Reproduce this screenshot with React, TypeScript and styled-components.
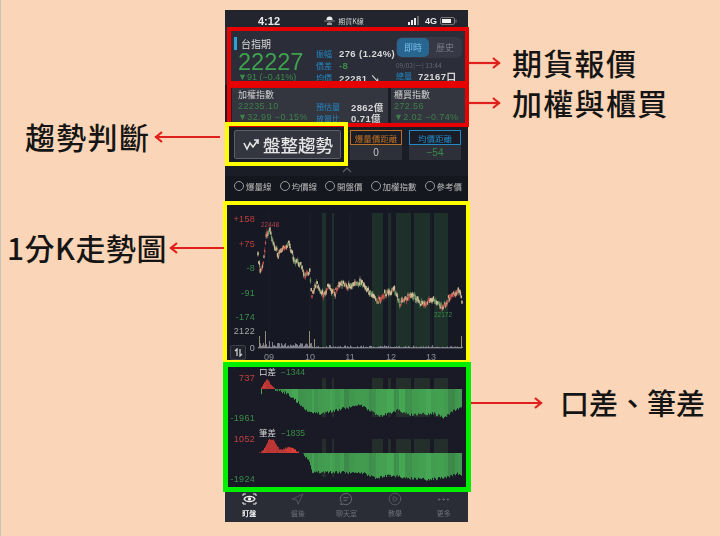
// #region imports
import React from 'react';
import styled, { createGlobalStyle } from 'styled-components';
import { Navigation, CirclePlay, MoreHorizontal } from 'lucide-react';
// #endregion imports

// #region data
type Point = [number, number];

const FONT = `"Liberation Sans", "Noto Sans CJK TC", sans-serif`;
const CJK = `"Noto Sans CJK TC", "Liberation Sans", sans-serif`;

const seeded = (seed: number) => () => {
    seed = (seed * 16807) % 2147483647;
    return (seed - 1) / 2147483646;
};

const interp = (points: Point[], x: number) => {
    for (let i = 1; i < points.length; i++) {
        if (x <= points[i][0]) {
            const [x0, y0] = points[i - 1];
            const [x1, y1] = points[i];
            return y0 + ((y1 - y0) * (x - x0)) / (x1 - x0 || 1);
        }
    }
    return points[points.length - 1][1];
};

// traced from the picture, in page pixels
const fromZoom = (zoom: Point[], oy: number): Point[] =>
    zoom.map(([x, y]) => [x / 3 + 220, y / 3 + oy] as Point);

const PRICE = fromZoom([
    [115, 175], [120, 205], [128, 205], [135, 140], [140, 100], [150, 95], [158, 120], [175, 165],
    [185, 145], [205, 130], [215, 150], [222, 180], [240, 190], [255, 225], [270, 215], [275, 290],
    [290, 250], [310, 285], [325, 260], [345, 280], [362, 245], [380, 260], [400, 255], [425, 245],
    [450, 280], [472, 305], [495, 280], [525, 270], [540, 310], [575, 285], [610, 315], [635, 297],
    [670, 322], [690, 290], [720, 270], [725, 300],
], 200);

const LOT_GREEN = fromZoom([
    [165, 90], [200, 100], [230, 125], [270, 160], [300, 160], [350, 150], [420, 135], [480, 170],
    [530, 150], [570, 165], [640, 160], [670, 175], [700, 150], [725, 145],
], 360);
const LOT_RED = fromZoom([[120, 88], [128, 75], [140, 55], [150, 72], [165, 88]], 360);
const TRADE_GREEN = fromZoom([
    [250, 282], [265, 300], [275, 340], [300, 335], [430, 340], [470, 355], [510, 345], [560, 355],
    [620, 358], [670, 355], [710, 340], [725, 352],
], 360);
const TRADE_RED = fromZoom([
    [115, 280], [130, 270], [145, 238], [160, 240], [178, 270], [210, 260], [240, 280],
], 360);

const BANDS: Point[] = [[322, 4], [332, 2], [372, 11], [388, 3], [396, 15], [414, 16], [434, 14]];
const GRID_X = [269, 310, 350, 391, 431];

const CANDLES = (() => {
    const rnd = seeded(71);
    const list: { x: number; y: number; h: number; wick: number; color: string }[] = [];
    for (let x = 258; x <= 462; x += 0.75) {
        const y = interp(PRICE, x) + (rnd() - 0.5) * 5;
        const pick = rnd();
        const slope = interp(PRICE, x + 2) - interp(PRICE, x);
        const color = slope > 1 ? (pick > 0.7 ? '#6f9c64' : '#d3c29a')
            : slope < -1 ? (pick > 0.55 ? '#c9504c' : '#d3a585')
            : pick > 0.8 ? '#b8584e' : pick > 0.65 ? '#6f9c64' : '#d3c29a';
        list.push({ x, y, h: 1.5 + rnd() * 2.4, wick: 2 + rnd() * 6, color });
    }
    return list;
})();

const VOLUMES = (() => {
    const rnd = seeded(29);
    const spikes: Record<number, number> = { 259: 12, 265: 17, 269: 7, 309: 17, 314: 9, 461: 12, 263: 5, 272: 6, 278: 5 };
    const list: Point[] = [];
    for (let x = 258; x <= 462; x += 1) {
        const base = x < 312 ? 1 + rnd() * 4 : 0.6 + rnd() * rnd() * 3;
        list.push([x, spikes[x] ?? base]);
    }
    return list;
})();

// wide lighter and darker stripes across the diff areas, and a rough lower edge
const STRIPES = (() => {
    const rnd = seeded(11);
    const list: { opacity: number; jag: number }[] = [];
    let opacity = 0.8;
    let left = 0;
    for (let i = 0; i < 204; i++) {
        if (left === 0) {
            opacity = 0.78 + rnd() * 0.22;
            left = 2 + Math.floor(rnd() * 6);
        }
        left -= 1;
        list.push({ opacity, jag: (rnd() - 0.5) * 3 });
    }
    return list;
})();

const RADIOS = ['爆量線', '均價線', '開盤價', '加權指數', '參考價'];
// #endregion data

// #region module
const GlobalStyle = createGlobalStyle`
    html, body {
        margin: 0;
        padding: 0;
        background: #fbd5b7;
    }
    body {
        font-family: ${FONT};
    }
`;

const Stage = styled.div`
    position: relative;
    width: 720px;
    height: 536px;
    overflow: hidden;
    box-sizing: border-box;
    padding: 10px 0 0 225px;
    background: #fbd5b7;
    border-left: 1px solid #c8c2bc;
`;

const Phone = styled.div`
    width: 243px;
    height: 512px;
    margin-left: -1px;
    display: flex;
    flex-direction: column;
    background: #1b1d26;
    color: #d6d6d6;
    overflow: hidden;
    filter: blur(0.3px);
`;

const StatusBar = styled.div`
    height: 17px;
    padding: 4px 11px 0 33px;
    box-sizing: border-box;
    display: flex;
    align-items: center;
    justify-content: space-between;
    background: #23252e;
    color: #e8e8e8;
`;

const Clock = styled.span`
    font-size: 11px;
    font-weight: 700;
`;

const AppTitle = styled.span`
    display: flex;
    align-items: center;
    gap: 3px;
    font-family: ${CJK};
    font-size: 7px;
    color: #cfcfcf;
`;

const Network = styled.span`
    display: flex;
    align-items: center;
    gap: 3px;
    font-size: 9px;
    font-weight: 700;
`;

const QuoteSection = styled.section`
    height: 58px;
    flex: none;
    padding: 0 5px 0 9px;
    display: flex;
    background: #2b2d38;
`;

const QuoteMain = styled.div`
    width: 82px;
    flex: none;
    overflow: hidden;
`;

const SymbolRow = styled.div`
    margin-top: 10px;
    height: 13px;
    display: flex;
    align-items: center;
    gap: 4px;
    font-family: ${CJK};
    font-size: 10px;
    line-height: 13px;
    color: #d8d8d8;
`;

const AccentBar = styled.i`
    width: 3px;
    height: 13px;
    background: #2f9fd8;
`;

const LastPrice = styled.div`
    margin: 2px 0 0 4px;
    height: 20px;
    font-size: 23.5px;
    line-height: 20px;
    color: #3fa24f;
`;

const PriceChange = styled.div`
    margin: 0 0 0 4px;
    height: 10px;
    font-size: 9px;
    line-height: 10px;
    white-space: nowrap;
    color: #3a8c49;
`;

const QuoteStats = styled.div`
    width: 80px;
    flex: none;
    padding-top: 21px;
    display: flex;
    flex-direction: column;
    gap: 0.5px;
`;

const StatRow = styled.div`
    height: 11.5px;
    display: flex;
    align-items: center;
    white-space: nowrap;
`;

const StatLabel = styled.span<{ $width: number }>`
    width: ${(props) => props.$width}px;
    flex: none;
    font-family: ${CJK};
    font-size: 8px;
    color: #2488c4;
`;

const StatValue = styled.span<{ $green?: boolean }>`
    font-family: ${FONT};
    font-size: 9.5px;
    font-weight: 700;
    letter-spacing: 0.4px;
    color: ${(props) => (props.$green ? '#3a8c49' : '#d8d8d8')};
`;

const QuoteSide = styled.div`
    width: 67px;
    flex: none;
    padding-top: 10px;
`;

const ModeToggle = styled.div`
    width: 66px;
    height: 21px;
    padding: 1px;
    box-sizing: border-box;
    display: flex;
    background: #363945;
    border-radius: 6px;
`;

const ModeTab = styled.span<{ $active?: boolean }>`
    flex: 1;
    display: flex;
    align-items: center;
    justify-content: center;
    border-radius: 5px;
    font-family: ${CJK};
    font-size: 9px;
    background: ${(props) => (props.$active ? '#28658f' : 'transparent')};
    color: ${(props) => (props.$active ? '#79c3ee' : '#777a84')};
`;

const QuoteTime = styled.div`
    margin-top: 3px;
    font-family: ${CJK};
    font-size: 6.5px;
    line-height: 9px;
    white-space: nowrap;
    color: #666973;
`;

const IndexRow = styled.section`
    height: 40px;
    flex: none;
    padding: 0 6px 0 7px;
    display: flex;
    gap: 3px;
    background: #1b1d26;
`;

const IndexCard = styled.div<{ $wide?: boolean }>`
    height: 40px;
    flex: ${(props) => (props.$wide ? '0 0 156px' : '1')};
    padding: 4px 0 0 ${(props) => (props.$wide ? 6 : 3)}px;
    box-sizing: border-box;
    display: flex;
    background: #33353f;
`;

const IndexText = styled.div`
    width: 78px;
    flex: none;
    white-space: nowrap;
`;

const IndexName = styled.div`
    font-family: ${CJK};
    font-size: 9px;
    line-height: 12px;
    color: #cfcfcf;
`;

const IndexValue = styled.div`
    font-size: 9px;
    line-height: 11px;
    letter-spacing: 0.4px;
    color: #3d8149;
`;

const IndexStats = styled.div`
    padding-top: 12px;
`;

const TrendRow = styled.section`
    height: 38px;
    flex: none;
    padding: 5px 6px 0 9px;
    box-sizing: border-box;
    display: flex;
    background: #1b1d26;
`;

const TrendButton = styled.div`
    width: 107px;
    height: 29px;
    flex: none;
    box-sizing: border-box;
    display: flex;
    align-items: center;
    gap: 4px;
    padding-left: 8px;
    background: #34363f;
    border: 1px solid #5d6068;
    border-radius: 2px;
`;

const TrendText = styled.span`
    font-family: ${CJK};
    font-size: 17.5px;
    font-weight: 500;
    white-space: nowrap;
    color: #e4e4e4;
`;

const DistanceBox = styled.div`
    width: 52px;
    flex: none;
    margin-left: 9px;
    & + & {
        margin-left: 7px;
    }
`;

const DistanceHead = styled.div<{ $color: string }>`
    height: 15px;
    box-sizing: border-box;
    display: flex;
    align-items: center;
    justify-content: center;
    border: 1px solid ${(props) => props.$color};
    font-family: ${CJK};
    font-size: 8.5px;
    white-space: nowrap;
    color: ${(props) => props.$color};
`;

const DistanceValue = styled.div<{ $green?: boolean }>`
    height: 15px;
    display: flex;
    align-items: center;
    justify-content: center;
    background: #2e3039;
    font-size: 10px;
    color: ${(props) => (props.$green ? '#3a8c49' : '#c8c8c8')};
`;

const CaretRow = styled.div`
    height: 13px;
    flex: none;
    display: flex;
    align-items: center;
    justify-content: center;
`;

const RadioRow = styled.div`
    height: 27px;
    flex: none;
    padding: 0 0 7px 9px;
    box-sizing: border-box;
    display: flex;
    align-items: center;
    gap: 8px;
    background: #15171f;
`;

const RadioItem = styled.label`
    display: flex;
    align-items: center;
    gap: 2px;
    font-family: ${CJK};
    font-size: 8.5px;
    white-space: nowrap;
    color: #b9b9b9;
`;

const RadioDot = styled.i`
    width: 10px;
    height: 10px;
    box-sizing: border-box;
    border: 1px solid #9a9a9a;
    border-radius: 50%;
`;

const ChartPanel = styled.section`
    position: relative;
    height: 159px;
    flex: none;
    background: #161823;
`;

const PanelSvg = styled.svg`
    display: block;
    width: 243px;
`;

const AxisSwitch = styled.span`
    position: absolute;
    left: 5px;
    bottom: 2px;
    width: 14px;
    height: 13px;
    display: flex;
    align-items: center;
    justify-content: center;
    border: 1px solid #3c3f4a;
    border-radius: 2px;
    background: #20222c;
`;

const DiffPanel = styled.section`
    height: 130px;
    flex: none;
    background: #191a25;
`;

const TabBar = styled.nav`
    height: 30px;
    flex: none;
    display: flex;
    background: #2a2c36;
`;

const TabItem = styled.div<{ $active?: boolean }>`
    flex: 1;
    display: flex;
    flex-direction: column;
    align-items: center;
    justify-content: flex-start;
    font-family: ${CJK};
    font-size: 7px;
    font-weight: ${(props) => (props.$active ? 700 : 400)};
    line-height: 9px;
    color: ${(props) => (props.$active ? '#f0f0f0' : '#6e717b')};
`;

const TabIcon = styled.span`
    height: 14px;
    margin-bottom: 3px;
    display: flex;
    align-items: center;
    justify-content: center;
`;

const Frame = styled.div<{ $x: number; $y: number; $w: number; $h: number; $color: string; $border: number }>`
    position: absolute;
    left: ${(props) => props.$x}px;
    top: ${(props) => props.$y}px;
    width: ${(props) => props.$w}px;
    height: ${(props) => props.$h}px;
    box-sizing: border-box;
    border: ${(props) => props.$border}px solid ${(props) => props.$color};
`;

const Callout = styled.div<{ $x: number; $y: number; $gap: number }>`
    position: absolute;
    left: ${(props) => props.$x}px;
    top: ${(props) => props.$y}px;
    height: 40px;
    display: flex;
    align-items: center;
    gap: ${(props) => props.$gap}px;
`;

const CalloutText = styled.span<{ $size?: number; $spacing?: number }>`
    margin-top: -2px;
    font-family: ${CJK};
    font-size: ${(props) => props.$size ?? 30}px;
    font-weight: 500;
    line-height: 40px;
    letter-spacing: ${(props) => props.$spacing ?? 1.3}px;
    white-space: nowrap;
    color: #151515;
`;

const Arrow = ({ width, left }: { width: number; left?: boolean }) => (
    <svg width={width} height={14} viewBox={`0 0 ${width} 14`} fill="none" stroke="#e0201c" strokeWidth={2.2}>
        {left ? (
            <>
                <path d={`M1 7H${width}`} />
                <path d="M8 2L2 7l6 5" />
            </>
        ) : (
            <>
                <path d={`M0 7H${width - 1}`} />
                <path d={`M${width - 8} 2l6 5-6 5`} />
            </>
        )}
    </svg>
);

const Bands = ({ top, height, color }: { top: number; height: number; color: string }) => (
    <>
        {BANDS.map(([x, w]) => (
            <rect key={x} x={x} y={top} width={w} height={height} fill={color} />
        ))}
    </>
);

const AxisText = ({ y, color, children }: { y: number; color: string; children: React.ReactNode }) => (
    <text x={255} y={y} textAnchor="end" fontSize={9} fontFamily={FONT} fill={color} letterSpacing={0.3}>
        {children}
    </text>
);

const PriceChart = () => (
    <PanelSvg height={159} viewBox="225 203 243 159">
        <Bands top={213} height={135} color="#1e302a" />
        {GRID_X.map((x) => (
            <line key={x} x1={x} x2={x} y1={213} y2={348} stroke="#23252f" strokeWidth={0.6} />
        ))}
        <AxisText y={222} color="#c2403e">+158</AxisText>
        <AxisText y={247} color="#c2403e">+75</AxisText>
        <AxisText y={271} color="#3a8c49">-8</AxisText>
        <AxisText y={296} color="#3a8c49">-91</AxisText>
        <AxisText y={320} color="#3a8c49">-174</AxisText>
        <AxisText y={334} color="#a8a8a8">2122</AxisText>
        <AxisText y={351} color="#a8a8a8">0</AxisText>
        <text x={261} y={227} fontSize={6.5} fontFamily={FONT} fill="#b8434a">22448</text>
        <text x={434} y={317} fontSize={6.5} fontFamily={FONT} fill="#3a8c49">22172</text>
        {CANDLES.map((c) => (
            <g key={c.x} stroke={c.color}>
                <line x1={c.x} x2={c.x} y1={c.y - c.wick / 2} y2={c.y + c.wick / 2} strokeWidth={0.6} />
                <line x1={c.x} x2={c.x} y1={c.y - c.h / 2} y2={c.y + c.h / 2} strokeWidth={1.3} />
            </g>
        ))}
        {VOLUMES.map(([x, h]) => (
            <rect key={x} x={x} y={348 - h} width={0.8} height={h} fill={h > 8 ? '#b5ab85' : '#9a9ca6'} />
        ))}
        <line x1={258} x2={462} y1={348} y2={348} stroke="#9a9ca6" strokeWidth={0.6} />
        {[['09', 269], ['10', 310], ['11', 350], ['12', 391], ['13', 431]].map(([label, x]) => (
            <text key={label} x={x} y={360} textAnchor="middle" fontSize={9} fontFamily={FONT} fill="#8b8d96">
                {label}
            </text>
        ))}
    </PanelSvg>
);

const DiffArea = ({ base, green, red, from }: { base: number; green: Point[]; red: Point[]; from: number }) => (
    <>
        {STRIPES.map(({ opacity, jag }, i) => {
            const x = 258 + i;
            if (x < from) {
                const y = interp(red, x) + jag / 2;
                return <rect key={x} x={x} y={y} width={1} height={Math.max(base - y, 0)} fill="#dd3d38" opacity={opacity} />;
            }
            const y = interp(green, x) + jag;
            return <rect key={x} x={x} y={base} width={1} height={Math.max(y - base, 0)} fill="#46a854" opacity={opacity} />;
        })}
    </>
);

const DiffChart = () => (
    <PanelSvg height={130} viewBox="225 362 243 130">
        <Bands top={378} height={39} color="#242e2b" />
        <Bands top={439} height={38} color="#242e2b" />
        <DiffArea base={389} green={LOT_GREEN} red={LOT_RED} from={275} />
        <DiffArea base={453} green={TRADE_GREEN} red={TRADE_RED} from={303} />
        <rect x={261} y={389} width={1} height={5} fill="#46a854" />
        <AxisText y={381} color="#c2403e">737</AxisText>
        <AxisText y={421} color="#3a8c49">-1961</AxisText>
        <AxisText y={442} color="#c2403e">1052</AxisText>
        <AxisText y={482} color="#3a8c49">-1924</AxisText>
        <text x={259} y={375} fontSize={8.5} fontFamily={CJK} fill="#d6d6d6">口差</text>
        <text x={281} y={375} fontSize={8.5} fontFamily={FONT} fill="#3a8c49">−1344</text>
        <text x={259} y={436} fontSize={8.5} fontFamily={CJK} fill="#d6d6d6">筆差</text>
        <text x={281} y={436} fontSize={8.5} fontFamily={FONT} fill="#3a8c49">−1835</text>
    </PanelSvg>
);

const Stat = ({ label, width, value, green }: { label: string; width: number; value: string; green?: boolean }) => (
    <StatRow>
        <StatLabel $width={width}>{label}</StatLabel>
        <StatValue $green={green}>{value}</StatValue>
    </StatRow>
);

const WatchIcon = () => (
    <svg width={15} height={12} viewBox="0 0 15 12" fill="none" stroke="#f0f0f0">
        <path d="M1 3V1h3M11 1h3v2M1 9v2h3M11 11h3V9" strokeWidth={1} />
        <path d="M2 6c2-3.4 9-3.4 11 0-2 3.4-9 3.4-11 0z" strokeWidth={1.3} />
        <circle cx={7.5} cy={6} r={1.7} fill="#f0f0f0" stroke="none" />
    </svg>
);

const ChatIcon = () => (
    <svg width={14} height={14} viewBox="0 0 16 16" fill="none" stroke="#6e717b" strokeWidth={1}>
        <path d="M8 1.5a6.5 6.5 0 1 1-3.2 12.2L2 14.5l.7-2.7A6.5 6.5 0 0 1 8 1.5z" />
        <path d="M5 6.5h6M5 9.5h4" />
    </svg>
);

const App = () => (
    <Stage>
        <GlobalStyle />
        <Phone>
            <StatusBar>
                <Clock>4:12</Clock>
                <AppTitle>
                    <svg width={11} height={9} viewBox="0 0 11 9">
                        <ellipse cx={5.5} cy={3.5} rx={3} ry={3} fill="#e8e8e8" />
                        <rect x={0} y={4} width={11} height={2} rx={1} fill="#55585f" />
                        <rect x={3} y={7} width={5} height={2} fill="#999" />
                    </svg>
                    期貨K線
                </AppTitle>
                <Network>
                    <svg width={14} height={9} viewBox="0 0 14 9" fill="#eee">
                        <rect x={0} y={6} width={2} height={3} />
                        <rect x={3} y={4} width={2} height={5} />
                        <rect x={6} y={2} width={2} height={7} />
                        <rect x={9} y={0} width={2} height={9} fill="#666" />
                    </svg>
                    4G
                    <svg width={17} height={8} viewBox="0 0 17 8">
                        <rect x={0.5} y={0.5} width={14} height={7} rx={1.5} fill="none" stroke="#777" />
                        <rect x={2} y={2} width={9} height={4} fill="#f2f2f2" />
                        <rect x={15.5} y={2.5} width={1} height={3} fill="#777" />
                    </svg>
                </Network>
            </StatusBar>

            <QuoteSection>
                <QuoteMain>
                    <SymbolRow>
                        <AccentBar />
                        台指期
                    </SymbolRow>
                    <LastPrice>22227</LastPrice>
                    <PriceChange>▼91 (−0.41%)</PriceChange>
                </QuoteMain>
                <QuoteStats>
                    <Stat label="振幅" width={23} value="276 (1.24%)" />
                    <Stat label="價差" width={23} value="-8" green />
                    <Stat label="均價" width={23} value="22281 ↘" />
                </QuoteStats>
                <QuoteSide>
                    <ModeToggle>
                        <ModeTab $active>即時</ModeTab>
                        <ModeTab>歷史</ModeTab>
                    </ModeToggle>
                    <QuoteTime>09/02(一) 13:44</QuoteTime>
                    <Stat label="總量" width={22} value="72167口" />
                </QuoteSide>
            </QuoteSection>

            <IndexRow>
                <IndexCard $wide>
                    <IndexText>
                        <IndexName>加權指數</IndexName>
                        <IndexValue>22235.10</IndexValue>
                        <IndexValue>▼32.99 −0.15%</IndexValue>
                    </IndexText>
                    <IndexStats>
                        <Stat label="預估量" width={35} value="2862億" />
                        <Stat label="放量比" width={35} value="0.71億" />
                    </IndexStats>
                </IndexCard>
                <IndexCard>
                    <IndexText>
                        <IndexName>櫃買指數</IndexName>
                        <IndexValue>272.56</IndexValue>
                        <IndexValue>▼2.02 −0.74%</IndexValue>
                    </IndexText>
                </IndexCard>
            </IndexRow>

            <TrendRow>
                <TrendButton>
                    <svg width={16} height={12} viewBox="0 0 16 12" fill="none" stroke="#e4e4e4" strokeWidth={1.6}>
                        <path d="M1 4l3 6 3-6 3 4 5-7" />
                        <path d="M11 1h4v4" />
                    </svg>
                    <TrendText>盤整趨勢</TrendText>
                </TrendButton>
                <DistanceBox>
                    <DistanceHead $color="#bd6f24">爆量價距離</DistanceHead>
                    <DistanceValue>0</DistanceValue>
                </DistanceBox>
                <DistanceBox>
                    <DistanceHead $color="#2488c4">均價距離</DistanceHead>
                    <DistanceValue $green>−54</DistanceValue>
                </DistanceBox>
            </TrendRow>

            <CaretRow>
                <svg width={10} height={6} viewBox="0 0 10 6" fill="none" stroke="#5d6068" strokeWidth={1.2}>
                    <path d="M1 5l4-4 4 4" />
                </svg>
            </CaretRow>

            <RadioRow>
                {RADIOS.map((label) => (
                    <RadioItem key={label}>
                        <RadioDot />
                        {label}
                    </RadioItem>
                ))}
            </RadioRow>

            <ChartPanel>
                <PriceChart />
                <AxisSwitch>
                    <svg width={9} height={9} viewBox="0 0 9 9" fill="none" stroke="#d8d8d8" strokeWidth={1.2}>
                        <path d="M3 8V1L1 3M6 1v7l2-2" />
                    </svg>
                </AxisSwitch>
            </ChartPanel>

            <DiffPanel>
                <DiffChart />
            </DiffPanel>

            <TabBar>
                <TabItem $active>
                    <TabIcon><WatchIcon /></TabIcon>
                    盯盤
                </TabItem>
                <TabItem>
                    <TabIcon><Navigation size={13} strokeWidth={1} color="#6e717b" /></TabIcon>
                    盤後
                </TabItem>
                <TabItem>
                    <TabIcon><ChatIcon /></TabIcon>
                    聊天室
                </TabItem>
                <TabItem>
                    <TabIcon><CirclePlay size={14} strokeWidth={1} color="#6e717b" /></TabIcon>
                    教學
                </TabItem>
                <TabItem>
                    <TabIcon><MoreHorizontal size={15} strokeWidth={1.6} color="#6e717b" /></TabIcon>
                    更多
                </TabItem>
            </TabBar>
        </Phone>

        <Frame $x={226} $y={27} $w={242} $h={58} $color="#e60000" $border={4} />
        <Frame $x={226} $y={84} $w={242} $h={43} $color="#e60000" $border={4} />
        <Frame $x={224} $y={122} $w={123} $h={44} $color="#ffff00" $border={4} />
        <Frame $x={222} $y={201} $w={247} $h={163} $color="#ffff00" $border={4} />
        <Frame $x={222} $y={362} $w={248} $h={130} $color="#00ee00" $border={5} />

        <Callout $x={468} $y={43} $gap={11}>
            <Arrow width={32} />
            <CalloutText>期貨報價</CalloutText>
        </Callout>
        <Callout $x={468} $y={83} $gap={11}>
            <Arrow width={32} />
            <CalloutText>加權與櫃買</CalloutText>
        </Callout>
        <Callout $x={24} $y={117} $gap={4}>
            <CalloutText>趨勢判斷</CalloutText>
            <Arrow width={66} left />
        </Callout>
        <Callout $x={6} $y={228} $gap={2}>
            <CalloutText $spacing={0.5}>1分K走勢圖</CalloutText>
            <Arrow width={55} left />
        </Callout>
        <Callout $x={470} $y={383} $gap={17}>
            <Arrow width={72} />
            <CalloutText $size={29} $spacing={0}>口差、筆差</CalloutText>
        </Callout>
    </Stage>
);

export default App;
// #endregion module
